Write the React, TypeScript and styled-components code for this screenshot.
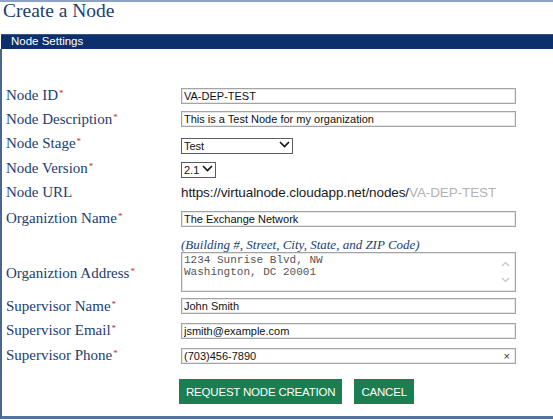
import React from 'react';
import styled, {createGlobalStyle} from 'styled-components';

const GlobalStyle = createGlobalStyle`
  html, body {
    margin: 0;
    padding: 0;
    background: #ffffff;
  }
  body {
    font-family: "Liberation Sans", Arial, sans-serif;
  }
`;

const Page = styled.div`
  width: 553px;
  height: 420px;
  border-top: 2px solid #8ea3c3;
  box-sizing: border-box;
  overflow: hidden;
`;

const Title = styled.h1`
  margin: 0;
  padding: 0 0 0 3px;
  height: 32px;
  font-family: "Liberation Serif", Georgia, serif;
  font-weight: normal;
  font-size: 19.5px;
  line-height: 18px;
  color: #22406f;
`;

const SectionBar = styled.div`
  margin-left: 1px;
  height: 14px;
  background: #0c306b;
  border-top: 1px solid #3a5583;
  color: #ffffff;
  font-size: 11.5px;
  line-height: 13px;
  padding-left: 10px;
`;

const Panel = styled.div`
  border-left: 2px solid #4a6590;
  border-bottom: 3px solid #4f73a7;
  height: 370px;
  box-sizing: border-box;
  padding: 35px 0 0 4px;
`;

const Row = styled.div<{ $h: number }>`
  display: grid;
  grid-template-columns: 175px 335px;
  align-items: center;
  height: ${p => p.$h}px;
`;

const AddressRow = styled.div`
  display: grid;
  grid-template-columns: 175px 335px;
  grid-template-rows: 14px 40px;
  padding: 5px 0 2px;
`;

const Label = styled.label`
  font-family: "Liberation Serif", Georgia, serif;
  font-size: 15px;
  color: #22406f;
  white-space: nowrap;
`;

const AddressLabel = styled(Label)`
  grid-column: 1;
  grid-row: 2;
  align-self: center;
  padding-top: 2px;
`;

const Req = styled.span`
  color: #d21f2b;
  font-size: 9px;
  vertical-align: 4px;
  margin-left: 1px;
`;

const TextInput = styled.input`
  display: block;
  width: 335px;
  height: 16px;
  box-sizing: border-box;
  border: 1px solid #a4a4a4;
  box-shadow: inset 0 0 0 1px #e6e6e6;
  padding: 0 2px;
  font-family: "Liberation Sans", Arial, sans-serif;
  font-size: 11px;
  color: #111;
  background: #fff;
  outline: none;
`;

const FieldWrap = styled.div`
  position: relative;
  width: 335px;
`;

const ClearMark = styled.span`
  position: absolute;
  right: 6px;
  top: 0;
  line-height: 16px;
  font-size: 11px;
  color: #333;
`;

const SelectWrap = styled.div<{ $w: number }>`
  position: relative;
  width: ${p => p.$w}px;
  height: 16px;
  > svg {
    position: absolute;
    right: 3px;
    top: 5px;
    pointer-events: none;
  }
`;

const Select = styled.select`
  appearance: none;
  width: 100%;
  height: 16px;
  box-sizing: border-box;
  border: 1px solid #5d5d5d;
  border-radius: 0;
  padding: 0 2px;
  font-family: "Liberation Sans", Arial, sans-serif;
  font-size: 11px;
  line-height: 14px;
  color: #111;
  background: #fff;
`;

const UrlText = styled.div`
  font-size: 13.5px;
  color: #1a1a1a;
  white-space: nowrap;
  letter-spacing: -0.1px;
  > span {
    color: #b3b3b3;
  }
`;

const Hint = styled.div`
  grid-column: 2;
  grid-row: 1;
  font-family: "Liberation Serif", Georgia, serif;
  font-style: italic;
  font-size: 13px;
  line-height: 14px;
  color: #22406f;
  white-space: nowrap;
`;

const AreaWrap = styled.div`
  grid-column: 2;
  grid-row: 2;
  position: relative;
  > svg {
    position: absolute;
    right: 6px;
    top: 9px;
  }
`;

const Area = styled.textarea`
  display: block;
  width: 335px;
  height: 40px;
  box-sizing: border-box;
  resize: none;
  overflow: hidden;
  border: 1px solid #a4a4a4;
  box-shadow: inset 0 0 0 1px #e6e6e6;
  padding: 1px 2px;
  font-family: "Liberation Mono", "Courier New", monospace;
  font-size: 11px;
  line-height: 12px;
  color: #555;
  outline: none;
`;

const Actions = styled.div`
  display: flex;
  gap: 12px;
  padding: 11px 0 0 173px;
`;

const Button = styled.button`
  height: 25px;
  padding: 0 7px;
  border: none;
  border-radius: 0;
  background: #1a7e50;
  color: #ffffff;
  font-family: "Liberation Sans", Arial, sans-serif;
  font-size: 11.5px;
  letter-spacing: -0.2px;
`;

function Chevron() {
  return (
    <svg width="11" height="7" viewBox="0 0 11 7">
      <polyline points="1,1 5.5,5.5 10,1" fill="none" stroke="#111" strokeWidth="1.6"/>
    </svg>
  );
}

function ScrollArrows() {
  return (
    <svg width="9" height="22" viewBox="0 0 9 22">
      <polyline points="1,5 4.5,1.5 8,5" fill="none" stroke="#c2c2c2" strokeWidth="1.2"/>
      <polyline points="1,17 4.5,20.5 8,17" fill="none" stroke="#c2c2c2" strokeWidth="1.2"/>
    </svg>
  );
}

function Required({children}: { children: React.ReactNode }) {
  return <Label>{children}<Req>*</Req></Label>;
}

function CreateNode() {
  return (
    <Page>
      <Title>Create a Node</Title>
      <SectionBar>Node Settings</SectionBar>
      <Panel>
        <Row $h={23}>
          <Required>Node ID</Required>
          <TextInput defaultValue="VA-DEP-TEST"/>
        </Row>
        <Row $h={24}>
          <Required>Node Description</Required>
          <TextInput defaultValue="This is a Test Node for my organization"/>
        </Row>
        <Row $h={25}>
          <Required>Node Stage</Required>
          <SelectWrap $w={112}>
            <Select defaultValue="Test">
              <option>Test</option>
              <option>Production</option>
            </Select>
            <Chevron/>
          </SelectWrap>
        </Row>
        <Row $h={24}>
          <Required>Node Version</Required>
          <SelectWrap $w={35}>
            <Select defaultValue="2.1">
              <option>2.1</option>
              <option>2.0</option>
            </Select>
            <Chevron/>
          </SelectWrap>
        </Row>
        <Row $h={24}>
          <Label>Node URL</Label>
          <UrlText>https://virtualnode.cloudapp.net/nodes/<span>VA-DEP-TEST</span></UrlText>
        </Row>
        <Row $h={29}>
          <Required>Organiztion Name</Required>
          <TextInput defaultValue="The Exchange Network"/>
        </Row>
        <AddressRow>
          <Hint>(Building #, Street, City, State, and ZIP Code)</Hint>
          <AddressLabel>Organiztion Address<Req>*</Req></AddressLabel>
          <AreaWrap>
            <Area defaultValue={'1234 Sunrise Blvd, NW\nWashington, DC 20001'}/>
            <ScrollArrows/>
          </AreaWrap>
        </AddressRow>
        <Row $h={24}>
          <Required>Supervisor Name</Required>
          <TextInput defaultValue="John Smith"/>
        </Row>
        <Row $h={25}>
          <Required>Supervisor Email</Required>
          <TextInput defaultValue="jsmith@example.com"/>
        </Row>
        <Row $h={25}>
          <Required>Supervisor Phone</Required>
          <FieldWrap>
            <TextInput defaultValue="(703)456-7890"/>
            <ClearMark>×</ClearMark>
          </FieldWrap>
        </Row>
        <Actions>
          <Button>REQUEST NODE CREATION</Button>
          <Button>CANCEL</Button>
        </Actions>
      </Panel>
    </Page>
  );
}

export default function App() {
  return (
    <>
      <GlobalStyle/>
      <CreateNode/>
    </>
  );
}
